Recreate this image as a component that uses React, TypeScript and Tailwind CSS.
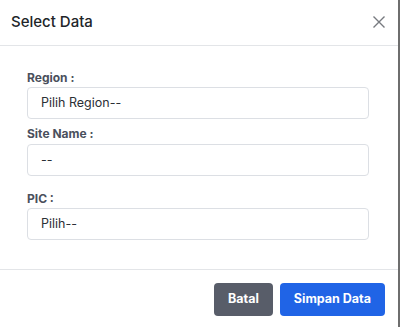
import React from "react";

const font = { fontFamily: "Inter, 'Liberation Sans', sans-serif" };

function Field({ label, value, labelClass }: { label: string; value: string; labelClass: string }) {
  return (
    <div className="flex flex-col">
      <div className={`h-[16px] leading-[16px] text-[12px] font-bold text-[#4a505c] ${labelClass}`}>{label}</div>
      <div className="h-[32px] w-full rounded-[4px] border border-[#dcdfe4] flex items-center pl-[13px] text-[12.5px] text-[#2b2f36]">
        {value}
      </div>
    </div>
  );
}

export default function App() {
  return (
    <div className="w-[400px] h-[327px] flex bg-[#6e6e6e]" style={font}>
      <div className="w-[398px] h-full bg-white flex flex-col">
        <div className="h-[46px] border-b border-[#e3e5e8] flex items-center justify-between pl-[11px] pr-[13px]">
          <span className="text-[15px] font-medium text-[#212529] pb-[1px]">Select Data</span>
          <svg width="12" height="12" viewBox="0 0 12 12" className="mb-[1px]">
            <path d="M0.5 0.5 L11.5 11.5 M11.5 0.5 L0.5 11.5" stroke="#777a7f" strokeWidth="1.4" fill="none" />
          </svg>
        </div>
        <div className="h-[223px] pt-[24px] pl-[27px] pr-[29px] flex flex-col">
          <Field label="Region :" value="Pilih Region--" labelClass="mb-[1px]" />
          <Field label="Site Name :" value="--" labelClass="mt-[7px] mb-[2px]" />
          <Field label="PIC :" value="Pilih--" labelClass="mt-[15px] mb-[1px]" />
        </div>
        <div className="flex-1 border-t border-[#e3e5e8] flex justify-end items-start pt-[13px] pr-[13px] gap-[7px]">
          <button className="h-[33px] px-[14px] rounded-[4px] bg-[#585d69] text-white text-[12.5px] font-bold">Batal</button>
          <button className="h-[33px] px-[14px] rounded-[4px] bg-[#2064e6] text-white text-[12.5px] font-bold">Simpan Data</button>
        </div>
      </div>
    </div>
  );
}
